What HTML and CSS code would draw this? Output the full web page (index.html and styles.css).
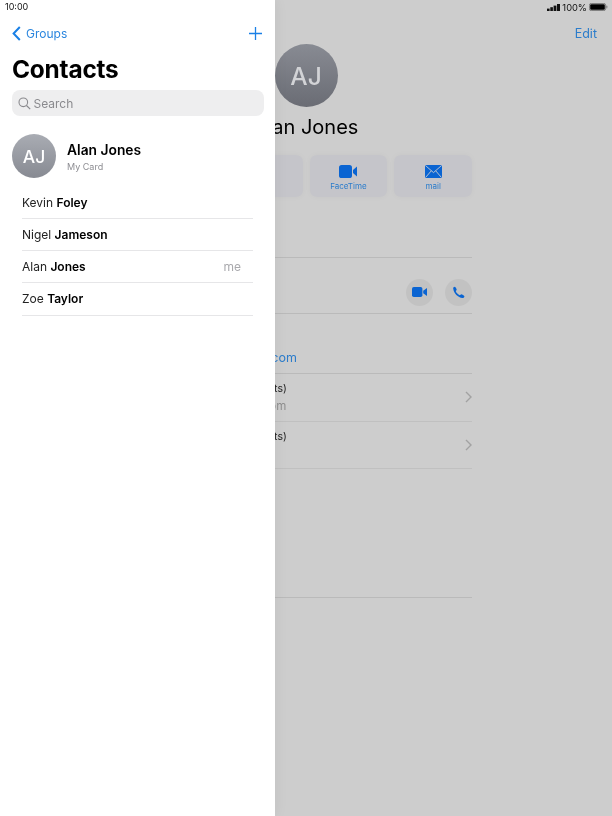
FILE: index.html
```html
<!DOCTYPE html>
<html lang="en">
<head>
<meta charset="utf-8">
<title>Contacts</title>
<link rel="stylesheet" href="styles.css">
</head>
<body>
<div class="screen">
  <main class="detail">
    <div class="status-right">
      <svg class="signal" width="13" height="7" viewBox="0 0 13 7"><rect x="0" y="4.6" width="2.6" height="2.4"/><rect x="3.3" y="3.2" width="2.6" height="3.8"/><rect x="6.6" y="1.6" width="2.8" height="5.4"/><rect x="10" y="0" width="3" height="7"/></svg>
      <span>100%</span>
      <svg class="battery" width="19" height="8" viewBox="0 0 19 8"><rect x="0.4" y="0.4" width="16.2" height="7.2" rx="2" fill="none" stroke="#555" stroke-width="0.7"/><rect x="1.2" y="1.2" width="14.6" height="5.6" rx="1.2" fill="#000"/><rect x="17.2" y="2.6" width="1.2" height="2.8" rx="0.6" fill="#888"/></svg>
    </div>
    <div class="detail-nav"><span class="edit">Edit</span></div>
    <div class="detail-body">
      <div class="big-avatar">AJ</div>
      <h2 class="detail-name">Alan Jones</h2>
      <div class="actions">
        <div class="action"></div>
        <div class="action"></div>
        <div class="action">
          <svg width="18" height="13" viewBox="0 0 18 13"><rect x="0" y="0" width="13" height="13" rx="2.6" fill="#0a64d2"/><path d="M14 5 L18 1.6 V11.4 L14 8 Z" fill="#0a64d2"/></svg>
          <span>FaceTime</span>
        </div>
        <div class="action">
          <svg width="17" height="13" viewBox="0 0 17 13"><rect x="0" y="0" width="17" height="13" rx="1.5" fill="#0a64d2"/><path d="M0.8 0.8 L8.5 7.6 L16.2 0.8 M0.8 12.2 L6.3 5.8 M16.2 12.2 L10.7 5.8" fill="none" stroke="#c9cbd0" stroke-width="0.9"/></svg>
          <span>mail</span>
        </div>
      </div>
      <div class="row row-empty"></div>
      <div class="row row-phone">
        <span class="round">
          <svg width="15" height="10" viewBox="0 0 15 10"><rect width="10.4" height="10" rx="1.8" fill="#0a64d2"/><path d="M11.2 3.8 L15 1 V9 L11.2 6.2 Z" fill="#0a64d2"/></svg>
        </span>
        <span class="round">
          <svg width="13" height="13" viewBox="0 0 13 13"><path d="M1.2 2.4 C1 1.6 1.9 .7 2.9 .7 C3.5 .7 4.7 3.2 4.7 3.7 C4.7 4.3 3.7 4.6 3.8 5.2 C4.2 6.6 6.2 8.7 7.7 9.2 C8.3 9.3 8.7 8.2 9.3 8.2 C9.9 8.2 12.4 9.5 12.4 10.2 C12.4 11.1 11.4 12.1 10.5 12 C6 11.6 1.7 7 1.2 2.4 Z" fill="#0a64d2"/></svg>
        </span>
      </div>
      <div class="row row-mail"><span class="link">alan.jones@example.com</span></div>
      <div class="row row-note">
        <div class="note-text"><span class="note-title">Calendar (Contacts)</span><span class="note-sub">alan@example.com</span></div>
        <svg class="chev" width="7" height="12" viewBox="0 0 7 12"><path d="M1 1 L6 6 L1 11" fill="none" stroke="#a2a2a2" stroke-width="1.4"/></svg>
      </div>
      <div class="row row-note">
        <div class="note-text"><span class="note-title">Calendar (Contacts)</span></div>
        <svg class="chev" width="7" height="12" viewBox="0 0 7 12"><path d="M1 1 L6 6 L1 11" fill="none" stroke="#a2a2a2" stroke-width="1.4"/></svg>
      </div>
      <div class="row row-last"></div>
    </div>
  </main>

  <aside class="panel">
    <div class="clock">10:00</div>
    <nav class="nav">
      <a class="back">
        <svg width="9" height="15" viewBox="0 0 9 15"><path d="M7.8 1 L1.6 7.5 L7.8 14" fill="none" stroke="#1a80e6" stroke-width="2"/></svg>
        <span>Groups</span>
      </a>
      <svg class="plus" width="13" height="13" viewBox="0 0 13 13"><path d="M6.5 0 V13 M0 6.5 H13" stroke="#1a80e6" stroke-width="1.3"/></svg>
    </nav>
    <h1 class="title">Contacts</h1>
    <div class="search">
      <svg width="13" height="13" viewBox="0 0 13 13"><circle cx="5.3" cy="5.3" r="4.3" fill="none" stroke="#8a8a8e" stroke-width="1.1"/><path d="M8.5 8.5 L12.2 12.2" stroke="#8a8a8e" stroke-width="1.2"/></svg>
      <span>Search</span>
    </div>
    <div class="card">
      <div class="avatar">AJ</div>
      <div class="card-text"><strong>Alan Jones</strong><span>My Card</span></div>
    </div>
    <ul class="list">
      <li>Kevin <b>Foley</b></li>
      <li>Nigel <b>Jameson</b></li>
      <li>Alan <b>Jones</b><em>me</em></li>
      <li>Zoe <b>Taylor</b></li>
    </ul>
  </aside>
</div>
</body>
</html>
```
FILE: styles.css
```css
* { box-sizing: border-box; }
html, body { margin: 0; padding: 0; }
body { font-family: Inter, "Liberation Sans", sans-serif; color: #000; }
.screen { position: relative; width: 612px; height: 816px; overflow: hidden; background: #cdcdcd; filter: blur(.3px); }

.detail { height: 100%; }
.status-right { display: flex; justify-content: flex-end; align-items: center; gap: 2px; height: 14px; padding-right: 4px; font-size: 9.3px; color: #111; }
.signal { fill: #111; }
.detail-nav { display: flex; justify-content: flex-end; align-items: center; height: 38px; padding-right: 15px; }
.edit { font-size: 12.5px; color: #2b7ccb; }
.detail-body { width: 332px; margin: -8px auto 0; display: flex; flex-direction: column; }
.big-avatar { align-self: center; width: 63px; height: 63px; border-radius: 50%; background: linear-gradient(#888b93, #6a6c74); color: #d2d3d6; font-size: 24.5px; font-weight: 500; display: flex; align-items: center; justify-content: center; }
.detail-name { align-self: center; margin: 8px 0 0; font-size: 20px; line-height: 24px; font-weight: 400; }
.actions { display: grid; grid-template-columns: repeat(4, 1fr); gap: 7px; margin-top: 16px; }
.action { height: 42px; border-radius: 7px; background: #c5c5ca; box-shadow: 0 0 6px rgba(0,0,0,.03); display: flex; flex-direction: column; align-items: center; justify-content: flex-end; gap: 3px; padding-bottom: 6px; font-size: 8px; color: #2b7ccb; }
.row { border-bottom: 1px solid #bababa; }
.row-empty { height: 61px; }
.row-phone { height: 56px; display: flex; justify-content: flex-end; align-items: center; gap: 12px; padding-top: 13px; }
.round { width: 27px; height: 27px; border-radius: 50%; background: #c2c2c2; display: flex; align-items: center; justify-content: center; }
.row-mail { height: 60px; display: flex; align-items: flex-end; padding-bottom: 7px; font-size: 12.5px; line-height: 16px; color: #2b7ccb; }
.link { margin-left: 6px; white-space: nowrap; }
.row-note { height: 47.5px; display: flex; justify-content: space-between; align-items: center; border-bottom-color: #c0c0c0; }
.note-text { display: flex; flex-direction: column; align-self: flex-start; padding-top: 8px; gap: 2px; white-space: nowrap; }
.note-title { font-size: 10.5px; line-height: 14px; margin-left: 47px; color: #222; }
.note-sub { font-size: 11.5px; line-height: 17px; margin-left: 40px; color: #8f8f8f; }
.row-last { height: 129px; }

.panel { position: absolute; top: 0; left: 0; bottom: 0; width: 275px; background: #fff; box-shadow: 0 0 14px rgba(0,0,0,.06); }
.clock { height: 14px; line-height: 14px; padding-left: 5px; font-size: 9px; color: #111; }
.nav { display: flex; justify-content: space-between; align-items: center; height: 38px; padding: 0 13px 0 12px; }
.back { display: flex; align-items: center; gap: 5px; font-size: 12px; color: #2b86de; }
.title { margin: 0; padding-left: 12px; height: 38px; font-size: 24.4px; line-height: 35px; font-weight: 700; letter-spacing: -.2px; }
.search { display: flex; align-items: center; gap: 2.5px; margin: 0 11.5px 0 12px; height: 26px; padding-left: 6px; border-radius: 8px; background: #eeeeef; font-size: 12px; color: #8a8a8e; }
.card { display: flex; align-items: center; gap: 11px; height: 44px; margin: 18px 0 0 12px; }
.avatar { width: 44px; height: 44px; border-radius: 50%; background: linear-gradient(#a9acb3, #878a92); color: #fff; font-size: 17.5px; font-weight: 500; display: flex; align-items: center; justify-content: center; }
.card-text { display: flex; flex-direction: column; }
.card-text strong { font-size: 13.8px; line-height: 20px; font-weight: 600; }
.card-text span { font-size: 9px; line-height: 13px; color: #8e8e93; }
.list { list-style: none; margin: 8.5px 22px 0; padding: 0; }
.list li { position: relative; height: 32.3px; line-height: 31.5px; font-size: 12px; color: #222; border-bottom: 1px solid #e6e6e8; }
.list b { font-weight: 600; color: #000; }
.list em { position: absolute; right: 12px; top: 0; font-style: normal; color: #a9a9ad; }
```
